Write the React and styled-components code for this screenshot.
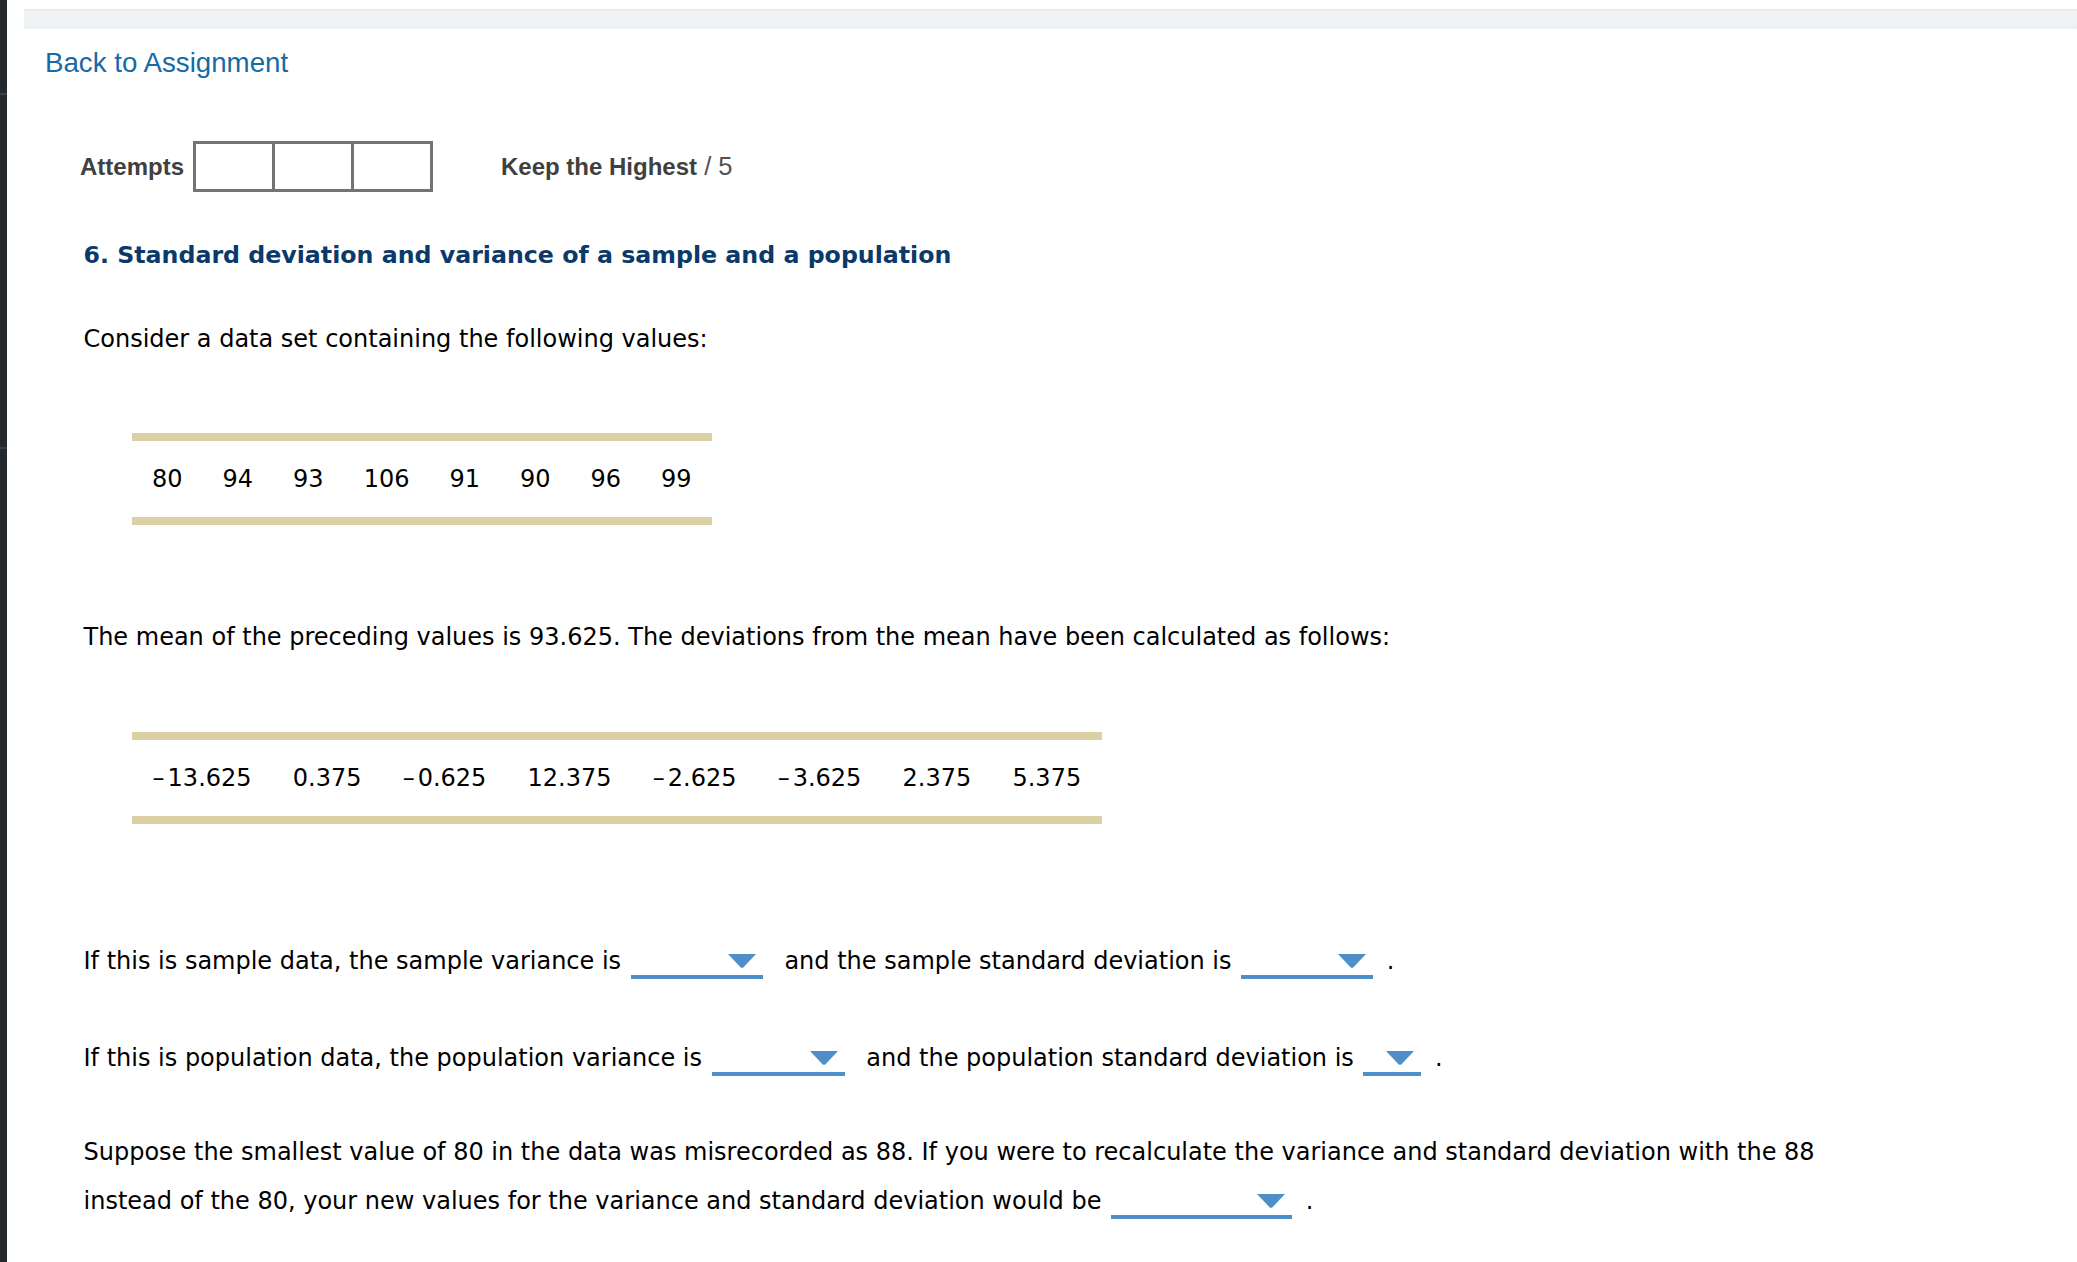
import React from "react";
import styled, { createGlobalStyle } from "styled-components";

const GlobalStyle = createGlobalStyle`
  html, body { margin: 0; padding: 0; background: #ffffff; }
  body { font-family: "DejaVu Sans", Verdana, sans-serif; color: #000; }
`;

const Page = styled.div`
  display: flex;
  min-height: 100vh;
`;

const Sidebar = styled.div`
  width: 7px;
  flex-shrink: 0;
  background: #25292c;
  display: flex;
  flex-direction: column;
`;

const SideDivider = styled.div`
  height: 2px;
  margin-top: ${(p) => p.$mt}px;
  background: #3c4145;
`;

const Main = styled.div`
  flex: 1;
  padding-top: 9px;
  min-width: 0;
`;

const TopBar = styled.div`
  margin-left: 17px;
  height: 20px;
  background: linear-gradient(#e2e7e8 0px, #f1f4f5 3px, #eef1f2 100%);
`;

const BackLink = styled.a`
  display: block;
  width: fit-content;
  margin: 17.5px 0 0 38px;
  font-family: "Liberation Sans", Arial, sans-serif;
  font-size: 27.7px;
  line-height: 32px;
  color: #176aa5;
  text-decoration: none;
`;

const AttemptsRow = styled.div`
  display: flex;
  align-items: center;
  margin: 62.5px 0 0 73px;
  font-family: "Liberation Sans", Arial, sans-serif;
  font-size: 24px;
  color: #404040;
`;

const AttemptsLabel = styled.span`
  font-weight: bold;
  margin-right: 9px;
`;

const AttemptBoxes = styled.div`
  display: flex;
  box-sizing: border-box;
  height: 51px;
  border: 3px solid #737373;
`;

const AttemptBox = styled.div`
  width: 76px;
  & + & {
    border-left: 3px solid #737373;
  }
`;

const ScoreText = styled.span`
  margin-left: 68px;
  font-size: 25.5px;
  color: #505050;
`;

const ScoreStrong = styled.span`
  font-size: 24px;
  font-weight: bold;
  color: #404040;
`;

const Question = styled.div`
  padding-left: 76.5px;
`;

const Heading = styled.h2`
  margin: 44.5px 0 0;
  font-size: 23.7px;
  font-weight: bold;
  line-height: 36px;
  color: #0b3a6a;
`;

const Para = styled.p`
  margin: ${(p) => p.$mt}px 0 0;
  font-size: 24px;
  line-height: ${(p) => p.$lh || 36}px;
  max-width: ${(p) => p.$maxw || 1900}px;
`;

const DataTable = styled.table`
  margin: ${(p) => p.$mt}px 0 0 48.5px;
  border-collapse: collapse;
  border-top: 8px solid #dbcfa4;
  border-bottom: 8px solid #dbcfa4;
`;

const Cell = styled.td`
  padding: 20px ${(p) => p.$px}px;
  font-size: 24px;
  line-height: 36px;
  white-space: nowrap;
`;

const Minus = styled.span`
  margin-right: 3px;
`;

const Select = styled.span`
  display: inline-block;
  overflow: hidden;
  box-sizing: border-box;
  width: ${(p) => p.$w}px;
  height: 28px;
  padding: 3px 7px 7px 0;
  margin: 0 ${(p) => p.$mr}px 0 2px;
  border-bottom: 4px solid #4f8fc7;
  vertical-align: -10px;
`;

const Caret = styled.svg`
  display: block;
  margin-left: auto;
  width: 28px;
  height: 14px;
`;

function Dropdown({ w, mr = 14 }) {
  return (
    <Select $w={w} $mr={mr}>
      <Caret viewBox="0 0 28 14">
        <path d="M0 0 H28 L15.5 13.2 Q14 14.5 12.5 13.2 Z" fill="#4f8fc7" />
      </Caret>
    </Select>
  );
}

function Num({ v, px }) {
  if (v.startsWith("-")) {
    return (
      <Cell $px={px}>
        <Minus>–</Minus>
        {v.slice(1)}
      </Cell>
    );
  }
  return <Cell $px={px}>{v}</Cell>;
}

const values = ["80", "94", "93", "106", "91", "90", "96", "99"];
const deviations = ["-13.625", "0.375", "-0.625", "12.375", "-2.625", "-3.625", "2.375", "5.375"];

export default function App() {
  return (
    <>
      <GlobalStyle />
      <Page>
        <Sidebar>
          <SideDivider $mt={93} />
          <SideDivider $mt={352} />
        </Sidebar>
        <Main>
          <TopBar />
          <BackLink href="#">Back to Assignment</BackLink>
          <AttemptsRow>
            <AttemptsLabel>Attempts</AttemptsLabel>
            <AttemptBoxes>
              <AttemptBox />
              <AttemptBox />
              <AttemptBox />
            </AttemptBoxes>
            <ScoreText>
              <ScoreStrong>Keep the Highest</ScoreStrong> / 5
            </ScoreText>
          </AttemptsRow>
          <Question>
            <Heading>6. Standard deviation and variance of a sample and a population</Heading>
            <Para $mt={48}>Consider a data set containing the following values:</Para>
            <DataTable $mt={76.3}>
              <tbody>
                <tr>
                  {values.map((v, i) => (
                    <Num key={i} v={v} px={20} />
                  ))}
                </tr>
              </tbody>
            </DataTable>
            <Para $mt={94.7}>
              The mean of the preceding values is 93.625. The deviations from the mean have been calculated as follows:
            </Para>
            <DataTable $mt={76.3}>
              <tbody>
                <tr>
                  {deviations.map((v, i) => (
                    <Num key={i} v={v} px={20.6} />
                  ))}
                </tr>
              </tbody>
            </DataTable>
            <Para $mt={119}>
              If this is sample data, the sample variance is <Dropdown w={132} /> and the sample standard deviation is{" "}
              <Dropdown w={132} mr={6} /> .
            </Para>
            <Para $mt={61}>
              If this is population data, the population variance is <Dropdown w={133} /> and the population standard
              deviation is <Dropdown w={58} mr={6} /> .
            </Para>
            <Para $mt={52.5} $lh={49} $maxw={1790}>
              Suppose the smallest value of 80 in the data was misrecorded as 88. If you were to recalculate the variance
              and standard deviation with the 88 instead of the 80, your new values for the variance and standard deviation
              would be <Dropdown w={181} mr={6} /> .
            </Para>
          </Question>
        </Main>
      </Page>
    </>
  );
}
